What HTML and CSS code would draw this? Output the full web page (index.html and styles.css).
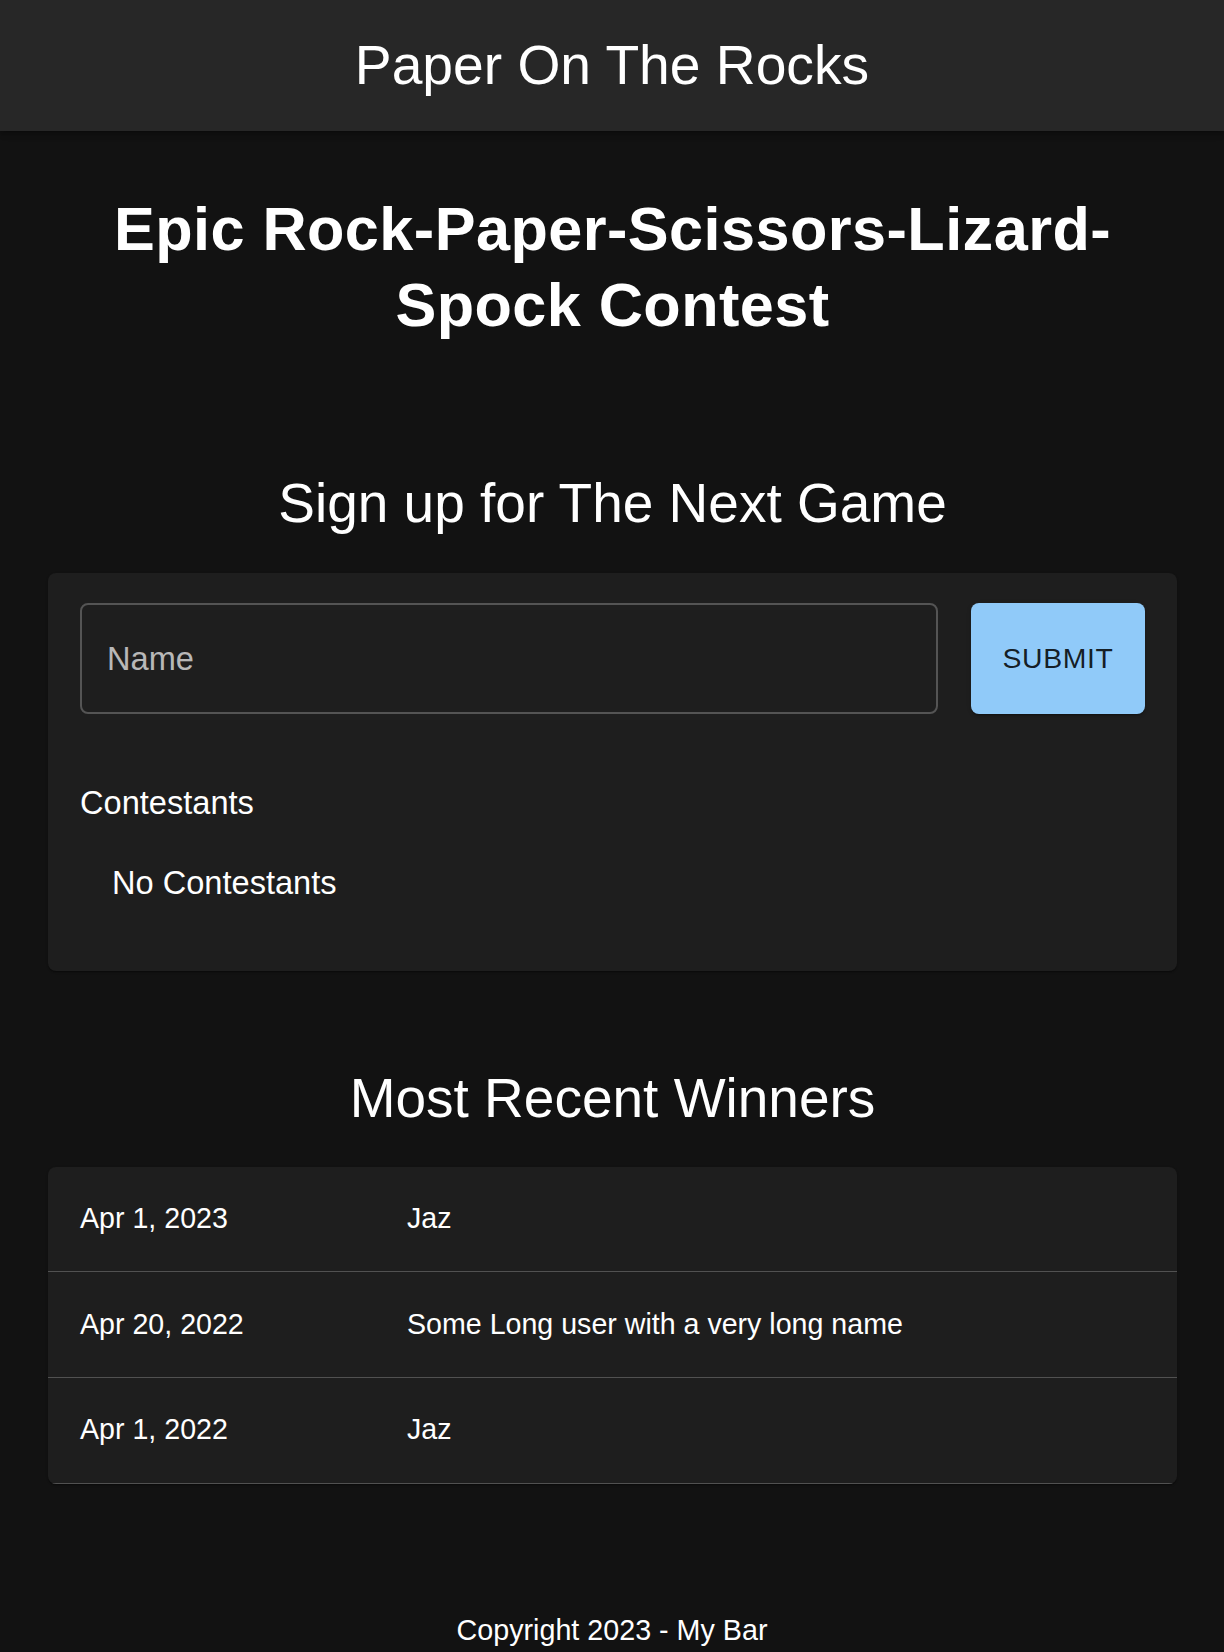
FILE: index.html
```html
<!DOCTYPE html>
<html lang="en">
<head>
<meta charset="utf-8">
<title>Paper On The Rocks</title>
<link rel="stylesheet" href="styles.css">
</head>
<body>
<header class="appbar">
  <div class="brand">Paper On The Rocks</div>
</header>
<main class="page">
  <h1 class="hero">Epic Rock-Paper-Scissors-Lizard-Spock Contest</h1>

  <section class="section signup-section">
    <h2 class="section-title">Sign up for The Next Game</h2>
    <div class="card signup-card">
      <form class="signup-form">
        <input class="name-input" type="text" placeholder="Name">
        <button class="submit" type="button">Submit</button>
      </form>
      <div class="contestants-label">Contestants</div>
      <ul class="contestant-list">
        <li class="contestant-item">No Contestants</li>
      </ul>
    </div>
  </section>

  <section class="section winners-section">
    <h2 class="section-title">Most Recent Winners</h2>
    <div class="card winners-card">
      <div class="winner-row"><div class="cell date">Apr 1, 2023</div><div class="cell name">Jaz</div></div>
      <div class="winner-row"><div class="cell date">Apr 20, 2022</div><div class="cell name">Some Long user with a very long name</div></div>
      <div class="winner-row"><div class="cell date">Apr 1, 2022</div><div class="cell name">Jaz</div></div>
    </div>
  </section>
</main>
<footer class="footer">Copyright 2023 - My Bar</footer>
</body>
</html>
```
FILE: styles.css
```css
* { box-sizing: border-box; }
html, body {
  margin: 0;
  padding: 0;
  background: #121212;
  color: #fff;
  font-family: "Liberation Sans", Arial, sans-serif;
}
.appbar {
  height: 131px;
  background: #272727;
  display: flex;
  align-items: center;
  justify-content: center;
  box-shadow: 0 2px 4px -1px rgba(0,0,0,0.2), 0 4px 5px 0 rgba(0,0,0,0.14), 0 1px 10px 0 rgba(0,0,0,0.12);
  position: relative;
}
.brand {
  font-size: 55.2px;
  line-height: 64px;
  padding-bottom: 2px;
  font-weight: 400;
}
.page {
  padding: 0 47px 0 48px;
}
.hero {
  margin: 60px 0 0;
  font-size: 61.2px;
  line-height: 76px;
  letter-spacing: 0.45px;
  font-weight: 700;
  text-align: center;
}
.section-title {
  margin: 0 0 36px;
  font-size: 55px;
  line-height: 66px;
  font-weight: 400;
  text-align: center;
}
.signup-section .section-title { margin-bottom: 37px; }
.signup-section { margin-top: 127px; }
.winners-section { margin-top: 94px; }
.card {
  background: #1e1e1e;
  border-radius: 8px;
  box-shadow: 0 2px 1px -1px rgba(0,0,0,0.2), 0 1px 1px 0 rgba(0,0,0,0.14), 0 1px 3px 0 rgba(0,0,0,0.12);
}
.signup-card {
  padding: 30px 32px 32px;
}
.signup-form {
  display: flex;
  gap: 33px;
  margin: 0;
}
.name-input {
  flex: 1;
  height: 111px;
  background: transparent;
  border: 2px solid #545454;
  border-radius: 8px;
  padding: 0 25px;
  font-family: inherit;
  font-size: 32.6px;
  color: #fff;
  outline: none;
}
.name-input::placeholder {
  color: rgba(255,255,255,0.7);
}
.submit {
  width: 174px;
  height: 111px;
  background: #90caf9;
  border: none;
  border-radius: 8px;
  font-family: inherit;
  font-size: 28.4px;
  font-weight: 500;
  letter-spacing: 0.6px;
  text-transform: uppercase;
  color: rgba(0,0,0,0.87);
  box-shadow: 0 3px 1px -2px rgba(0,0,0,0.2), 0 2px 2px 0 rgba(0,0,0,0.14), 0 1px 5px 0 rgba(0,0,0,0.12);
  padding: 0;
}
.contestants-label {
  margin-top: 65px;
  font-size: 32.6px;
  line-height: 48px;
}
.contestant-list {
  list-style: none;
  margin: 0;
  padding: 16px 0;
}
.contestant-item {
  padding: 16px 32px;
  font-size: 32.6px;
  line-height: 48px;
}
.winners-card {
  overflow: hidden;
}
.winner-row {
  display: grid;
  grid-template-columns: 327px 1fr;
  border-bottom: 1px solid #515151;
}
.winner-row:first-child .cell {
  padding-top: 31px;
  padding-bottom: 33px;
}
.winner-row:last-child .cell {
  padding-top: 31px;
  padding-bottom: 34px;
}
.cell {
  padding: 32px 32px 33px;
  font-size: 28.6px;
  line-height: 40px;
}
.footer {
  margin-top: 126px;
  text-align: center;
  font-size: 28.7px;
  line-height: 40px;
  padding-bottom: 24px;
}
```
